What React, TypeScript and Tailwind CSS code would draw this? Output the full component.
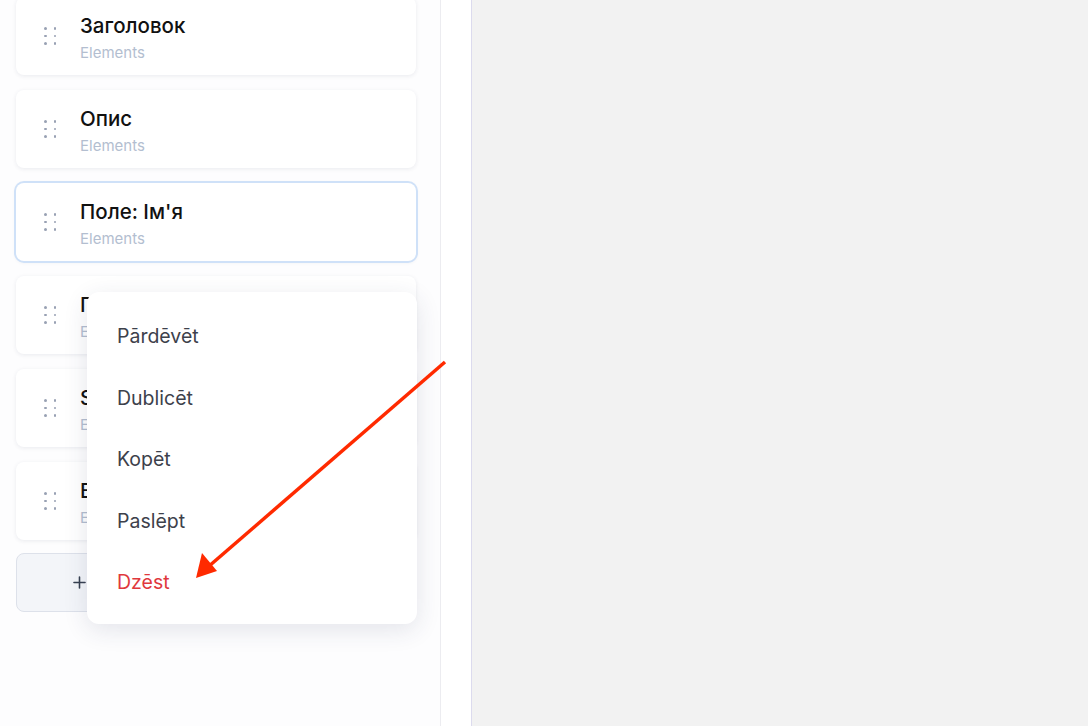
import { Plus } from 'lucide-react'

interface Item {
  title: string
  selected?: boolean
}

const items: Item[] = [
  { title: 'Заголовок' },
  { title: 'Опис' },
  { title: "Поле: Ім'я", selected: true },
  { title: 'Поле: Email' },
  { title: 'Submit' },
  { title: 'Вхід' }
]

const menu = ['Pārdēvēt', 'Dublicēt', 'Kopēt', 'Paslēpt']

function DragHandle () {
  return (
    <div className="grid w-[12px] grid-cols-2 gap-x-[7px] gap-y-[5px]">
      {[0, 1, 2, 3, 4, 5].map((i) => (
        <span key={i} className="h-[2.5px] w-[2.5px] rounded-full bg-[#98a1b3]" />
      ))}
    </div>
  )
}

function Card ({ item }: { item: Item }) {
  return (
    <div
      className={`flex h-[78px] items-center rounded-lg bg-white pl-7 shadow-[0_1px_4px_rgba(30,40,80,0.09)] ${
        item.selected ? 'ring-2 ring-[#cfe1f8]' : ''
      }`}
    >
      <DragHandle />
      <div className="mt-[4px] ml-6 flex flex-col gap-[5px]">
        <span className="text-[20.5px] leading-6 font-medium text-[#111111]">{item.title}</span>
        <span className="text-[15px] leading-5 text-[#b3bed0]">Elements</span>
      </div>
    </div>
  )
}

export default function App () {
  return (
    <div
      className="relative flex h-[726px] w-[1088px] overflow-hidden bg-[#f2f2f2]"
      style={{ fontFamily: 'Inter, "Noto Sans", sans-serif' }}
    >
      <div className="w-[441px] border-r border-[#ececf0] bg-[#fdfdfe] pr-6 pl-4">
        <div className="-mt-[3px] flex flex-col gap-[15px]">
          {items.map((item) => (
            <Card key={item.title} item={item} />
          ))}
        </div>
        <button className="mt-[13px] flex h-[59px] w-full items-center gap-3 rounded-lg border border-[#dde1ea] bg-[#f3f5f9] pl-[53px] text-[16px] text-[#374151]">
          <Plus className="h-[19px] w-[19px]" strokeWidth={2} />
          <span>Додати елемент</span>
        </button>
      </div>
      <div className="w-[31px] border-r border-[#dcdbee] bg-white" />
      <div className="flex-1" />

      <div className="absolute top-[292px] left-[87px] w-[330px] rounded-xl bg-white pt-[14px] pb-[10px] shadow-[0_6px_24px_rgba(40,50,90,0.12)]">
        {menu.map((label) => (
          <div key={label} className="flex h-[61.5px] items-center px-[30px] text-[19.5px] text-[#3d414b]">
            {label}
          </div>
        ))}
        <div className="flex h-[61.5px] items-center px-[30px] text-[19.5px] text-[#e0383d]">Dzēst</div>
      </div>

      <svg className="pointer-events-none absolute top-0 left-0" width="1088" height="726">
        <line x1="445" y1="362" x2="208" y2="567" stroke="#ff2a00" strokeWidth="3.5" />
        <polygon points="196,578 202,553 217,571" fill="#ff2a00" />
      </svg>
    </div>
  )
}
